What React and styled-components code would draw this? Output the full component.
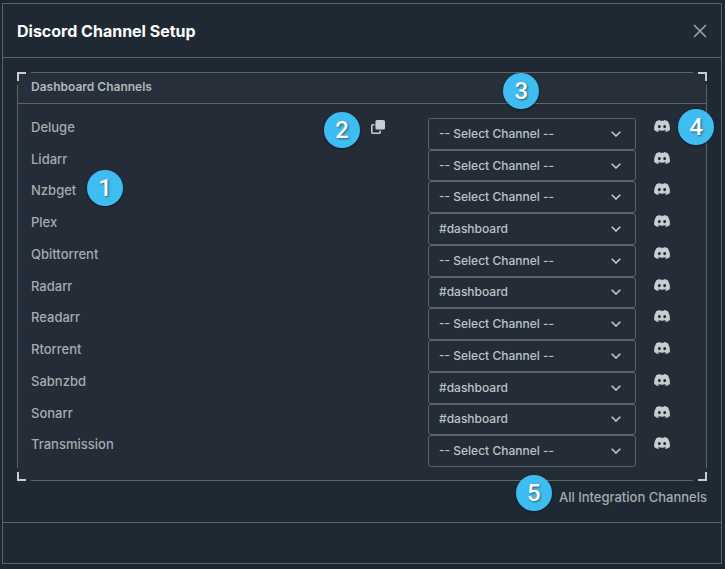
import React from "react";
import styled, { createGlobalStyle, css } from "styled-components";

const line = "#5a646e";

const GlobalStyle = createGlobalStyle`
  *, *::before, *::after { box-sizing: border-box; }
  html { background: #1b2631; }
  body {
    margin: 0;
    padding: 3px 3px 5px 2px;
    color: #a6abb0;
    font-family: Inter, "Liberation Sans", sans-serif;
    font-size: 13px;
    font-weight: 500;
    line-height: 18px;
  }
`;

const Modal = styled.section`
  border: 1px solid ${line};
  background: #1f2934;
`;

const Header = styled.header`
  display: flex;
  align-items: center;
  justify-content: space-between;
  height: 54px;
  padding: 0 14px;
  border-bottom: 1px solid ${line};
`;

const Title = styled.h1`
  margin: 0;
  color: #fff;
  font-size: 16px;
  font-weight: 700;
  line-height: 24px;
`;

const IconButton = styled.button`
  display: flex;
  padding: 0;
  border: 0;
  background: none;
  color: ${(p) => (p.$muted ? "#a0a5ab" : "#c9ccd1")};
  cursor: pointer;
`;

const CellButton = styled(IconButton)`
  padding-top: 2px;
`;

const Body = styled.div`
  padding: 14px 14px 15px;
`;

const Card = styled.div`
  position: relative;
  padding: 1px;
  background:
    linear-gradient(${line}, ${line}) center top / calc(100% - 28px) 1px no-repeat,
    linear-gradient(${line}, ${line}) center bottom / calc(100% - 28px) 1px no-repeat,
    linear-gradient(${line}, ${line}) left center / 1px calc(100% - 26px) no-repeat,
    linear-gradient(${line}, ${line}) right center / 1px calc(100% - 26px) no-repeat,
    #232c37;
`;

const Corner = styled.span`
  position: absolute;
  width: 9px;
  height: 9px;
  border: 0 solid #c9ccd1;
  ${(p) => css`
    ${p.$v}: 0;
    ${p.$h}: 0;
    border-${p.$v}-width: 2px;
    border-${p.$h}-width: 2px;
  `}
`;

const CardHeader = styled.div`
  position: relative;
  padding: 5px 13px 7px;
  border-bottom: 1px solid ${line};
  background: #262f3a;
`;

const CardTitle = styled.h2`
  margin: 0;
  color: #b3b7bc;
  font-size: 12px;
  font-weight: 600;
  line-height: 18px;
`;

const ChannelList = styled.div`
  display: grid;
  grid-auto-rows: 1fr;
  height: 376px;
  padding: 14px 13px 13px;
`;

const Row = styled.div`
  display: grid;
  grid-template-columns: 397fr 208fr 57fr;
  align-items: start;
`;

const NameCell = styled.div`
  display: flex;
  align-items: flex-start;
  justify-content: space-between;
  padding-right: 43px;
`;

const Anchor = styled.span`
  position: relative;
  display: flex;
`;

const SelectBox = styled.div`
  display: grid;
  align-items: center;
  height: 100%;

  & > * { grid-area: 1 / 1; }
  & > svg {
    justify-self: end;
    margin-right: 15px;
    pointer-events: none;
  }
`;

const Select = styled.select`
  width: 100%;
  height: 100%;
  padding: 0 30px 0 10px;
  border: 1px solid ${line};
  border-radius: 3px;
  appearance: none;
  background: transparent;
  color: #bfc3c7;
  font: 500 12px/18px Inter, "Liberation Sans", sans-serif;

  option { background: #232c37; }
`;

const IconCell = styled.div`
  display: flex;
  justify-content: center;
  padding-right: 5px;
`;

const LinkRow = styled.div`
  display: flex;
  justify-content: flex-end;
  padding-top: 6px;
`;

const IntegrationLink = styled.a`
  color: inherit;
  line-height: 20px;
  text-decoration: none;
`;

const Footer = styled.footer`
  height: 41px;
  border-top: 1px solid ${line};
`;

const Badge = styled.span`
  position: absolute;
  z-index: 1;
  left: ${(p) => p.$left};
  top: ${(p) => p.$top};
  display: flex;
  align-items: center;
  justify-content: center;
  width: 36px;
  height: 36px;
  border-radius: 50%;
  background: #3dbdf1;
  box-shadow: 0 1px 2px #111a23;
  color: #fff;
  font: 500 24px/36px Roboto, sans-serif;
  text-shadow: 1px 1px 2px #345a70;
`;

const CloseIcon = () => (
  <svg width="14" height="14" viewBox="0 0 14 14" fill="none" stroke="currentColor" strokeWidth="1.5" aria-hidden="true">
    <path d="M1 1l12 12M13 1L1 13" />
  </svg>
);

const CopyIcon = () => (
  <svg width="14" height="14" viewBox="0 0 14 14" aria-hidden="true">
    <path d="M3.5 4.8H1.8a1 1 0 0 0-1 1v6.4a1 1 0 0 0 1 1h6.4a1 1 0 0 0 1-1v-1.7" fill="none" stroke="currentColor" strokeWidth="1.6" />
    <rect x="4.4" y="0" width="9.6" height="9.6" rx="1.6" fill="currentColor" />
  </svg>
);

const ChevronIcon = () => (
  <svg width="10" height="6" viewBox="0 0 10 6" fill="none" stroke="#c9ccd1" strokeWidth="1.5" aria-hidden="true">
    <path d="M.7.7L5 5 9.3.7" />
  </svg>
);

const DiscordIcon = () => (
  <svg width="16" height="12" viewBox="0 0 16 12" fill="currentColor" aria-hidden="true">
    <path
      fillRule="evenodd"
      d="M13.55 1A13.2 13.2 0 0 0 10.29 0l-.42.84a12.2 12.2 0 0 0-3.66 0A8.6 8.6 0 0 0 5.79 0a13.1 13.1 0 0 0-3.26 1C.46 4.07-.1 7.06.18 10a13.2 13.2 0 0 0 4 2c.32-.43.61-.9.86-1.37l-1.35-.64.33-.25a9.4 9.4 0 0 0 8.04 0l.33.25-1.35.64c.25.48.53.94.86 1.37a13.2 13.2 0 0 0 4-2C16.23 6.6 15.33 3.64 13.55 1zM5.35 8.2c-.78 0-1.43-.72-1.43-1.6s.63-1.61 1.43-1.61 1.44.72 1.43 1.61c0 .88-.64 1.6-1.43 1.6zm5.3 0c-.78 0-1.43-.72-1.43-1.6s.63-1.61 1.43-1.61 1.44.72 1.43 1.61c0 .88-.64 1.6-1.43 1.6z"
    />
  </svg>
);

const channels = [
  { name: "Deluge", value: "", copy: true, step: 4 },
  { name: "Lidarr", value: "" },
  { name: "Nzbget", value: "", nameStep: 1 },
  { name: "Plex", value: "dashboard" },
  { name: "Qbittorrent", value: "" },
  { name: "Radarr", value: "dashboard" },
  { name: "Readarr", value: "" },
  { name: "Rtorrent", value: "" },
  { name: "Sabnzbd", value: "dashboard" },
  { name: "Sonarr", value: "dashboard" },
  { name: "Transmission", value: "" },
];

function ChannelRow({ name, value, copy, step, nameStep }) {
  const id = `channel-${name.toLowerCase()}`;
  return (
    <Row>
      <NameCell>
        <Anchor>
          <label htmlFor={id}>{name}</label>
          {nameStep && <Badge $left="56px" $top="-11px">{nameStep}</Badge>}
        </Anchor>
        {copy && (
          <Anchor>
            <CellButton type="button" aria-label="Copy channel to all">
              <CopyIcon />
            </CellButton>
            <Badge $left="-47px" $top="-6px">2</Badge>
          </Anchor>
        )}
      </NameCell>
      <SelectBox>
        <Select id={id} defaultValue={value}>
          <option value="">-- Select Channel --</option>
          <option value="dashboard">#dashboard</option>
        </Select>
        <ChevronIcon />
      </SelectBox>
      <IconCell>
        <Anchor>
          <CellButton type="button" aria-label={`Test ${name} on Discord`}>
            <DiscordIcon />
          </CellButton>
          {step && <Badge $left="24px" $top="-9px">{step}</Badge>}
        </Anchor>
      </IconCell>
    </Row>
  );
}

export default function App() {
  return (
    <>
      <GlobalStyle />
      <Modal role="dialog" aria-labelledby="dialog-title">
        <Header>
          <Title id="dialog-title">Discord Channel Setup</Title>
          <IconButton type="button" aria-label="Close" $muted>
            <CloseIcon />
          </IconButton>
        </Header>
        <Body>
          <Card>
            <CardHeader>
              <CardTitle>Dashboard Channels</CardTitle>
              <Badge $left="calc(73% - 17px)" $top="0">3</Badge>
            </CardHeader>
            <ChannelList>
              {channels.map((channel) => (
                <ChannelRow key={channel.name} {...channel} />
              ))}
            </ChannelList>
            <Corner $v="top" $h="left" />
            <Corner $v="top" $h="right" />
            <Corner $v="bottom" $h="left" />
            <Corner $v="bottom" $h="right" />
          </Card>
          <LinkRow>
            <Anchor>
              <Badge $left="-43px" $top="-12px">5</Badge>
              <IntegrationLink href="#channels">All Integration Channels</IntegrationLink>
            </Anchor>
          </LinkRow>
        </Body>
        <Footer />
      </Modal>
    </>
  );
}
